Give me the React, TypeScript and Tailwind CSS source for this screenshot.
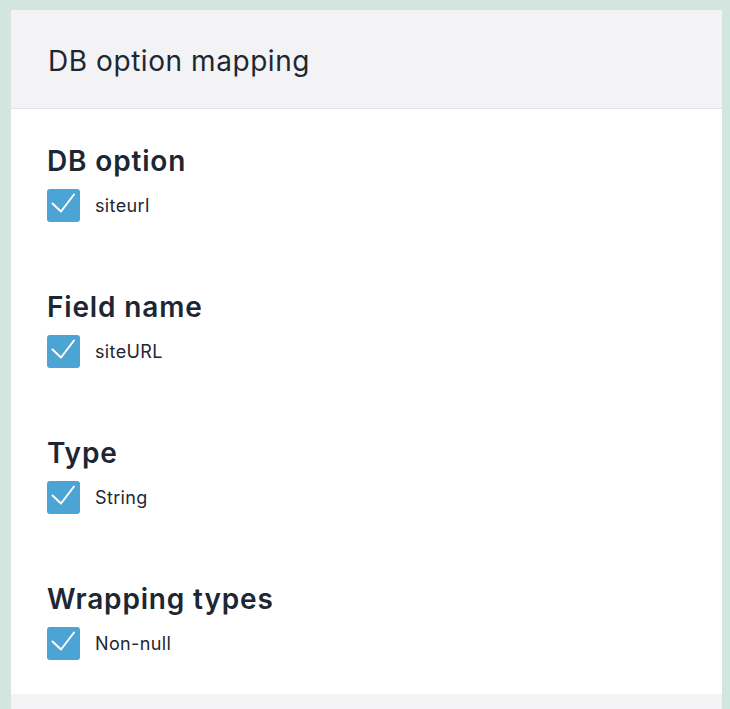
import React from 'react';

// ─── Data ─────────────────────────────────────────────────────────────────────

const sections = [
  { title: 'DB option', value: 'siteurl' },
  { title: 'Field name', value: 'siteURL' },
  { title: 'Type', value: 'String' },
  { title: 'Wrapping types', value: 'Non-null' },
];

// ─── Checkbox ─────────────────────────────────────────────────────────────────

function CheckedBox() {
  return (
    <span className="flex h-[33px] w-[33px] shrink-0 items-center justify-center rounded-[3px] bg-[#4ba4d3]">
      <svg width="33" height="33" viewBox="0 0 33 33" fill="none">
        <polyline
          points="5.5,14.5 14,22.5 27,5.5"
          stroke="white"
          strokeWidth="2"
          strokeLinecap="round"
          strokeLinejoin="round"
        />
      </svg>
    </span>
  );
}

function Section({ title, value }: { title: string; value: string }) {
  return (
    <div className="flex flex-col">
      <h3 className="text-[28px] font-semibold leading-[32px] tracking-[0.03em] text-[#1d2733]">{title}</h3>
      <label className="mt-[12px] flex items-center gap-[15px]">
        <CheckedBox />
        <span className="text-[18px] leading-[20px] tracking-[0.02em] text-[#1d2733]">{value}</span>
      </label>
    </div>
  );
}

export default function App() {
  return (
    <div
      className="min-h-[709px] w-full overflow-hidden bg-[#d3e5df] pl-[11px] pt-[10px]"
      style={{ fontFamily: 'Inter, "Noto Sans", sans-serif' }}
    >
      <div className="w-[711px] bg-white">
        <div className="flex h-[99px] items-center border-b border-[#e2e3e6] bg-[#f3f3f5] px-[37px] pt-[3px]">
          <h2 className="text-[28px] font-normal tracking-[0.02em] text-[#1d2733]">DB option mapping</h2>
        </div>
        <div className="flex flex-col gap-[69px] px-[36px] pb-[34px] pt-[36px]">
          {sections.map((s) => (
            <Section key={s.title} title={s.title} value={s.value} />
          ))}
        </div>
        <div className="h-[40px] bg-[#f3f3f5]" />
      </div>
    </div>
  );
}
